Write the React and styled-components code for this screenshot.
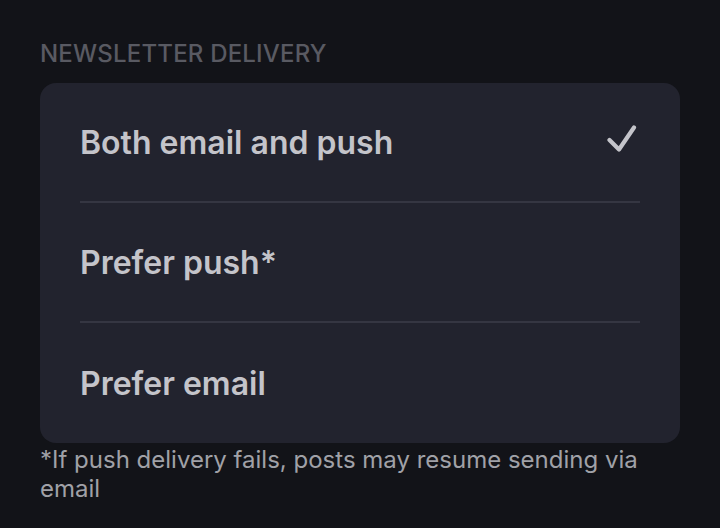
import React from 'react';
import styled, { createGlobalStyle } from 'styled-components';

const GlobalStyle = createGlobalStyle`
  html, body {
    margin: 0;
    background: #121318;
    font-family: Inter, "Noto Sans", sans-serif;
  }
`;

const Page = styled.div`
  width: 720px;
  height: 528px;
  box-sizing: border-box;
  padding: 38px 40px 0;
  background: #121318;
`;

const SectionTitle = styled.div`
  font-size: 24px;
  font-weight: 500;
  letter-spacing: 0.2px;
  color: #595a62;
  line-height: 32px;
  margin-bottom: 13px;
`;

const Card = styled.ul`
  list-style: none;
  margin: 0;
  padding: 0 40px;
  background: #22232e;
  border-radius: 16px;
`;

const Option = styled.li`
  display: flex;
  align-items: center;
  justify-content: space-between;
  height: 120px;
  box-sizing: border-box;
  border-bottom: ${({ $last }) => ($last ? 'none' : '2px solid #353642')};
  font-size: 32px;
  font-weight: 600;
  color: #c4c4ca;
`;

const Check = styled.svg`
  width: 30px;
  height: 28px;
  margin-right: 3px;
  margin-top: -7px;
`;

const Note = styled.p`
  margin: 2px 0 0;
  font-size: 24px;
  line-height: 29px;
  color: #a0a1a7;
`;

const options = [
  { label: 'Both email and push', selected: true },
  { label: 'Prefer push*' },
  { label: 'Prefer email' },
];

export default function App() {
  return (
    <>
      <GlobalStyle />
      <Page>
        <SectionTitle>NEWSLETTER DELIVERY</SectionTitle>
        <Card>
          {options.map((o, i) => (
            <Option key={o.label} $last={i === options.length - 1}>
              {o.label}
              {o.selected && (
                <Check viewBox="0 0 30 28" fill="none" stroke="#c4c4ca" strokeWidth="4.2" strokeLinecap="round" strokeLinejoin="round">
                  <path d="M2.5 15L12 24.5L27 2.5" />
                </Check>
              )}
            </Option>
          ))}
        </Card>
        <Note>*If push delivery fails, posts may resume sending via email</Note>
      </Page>
    </>
  );
}
